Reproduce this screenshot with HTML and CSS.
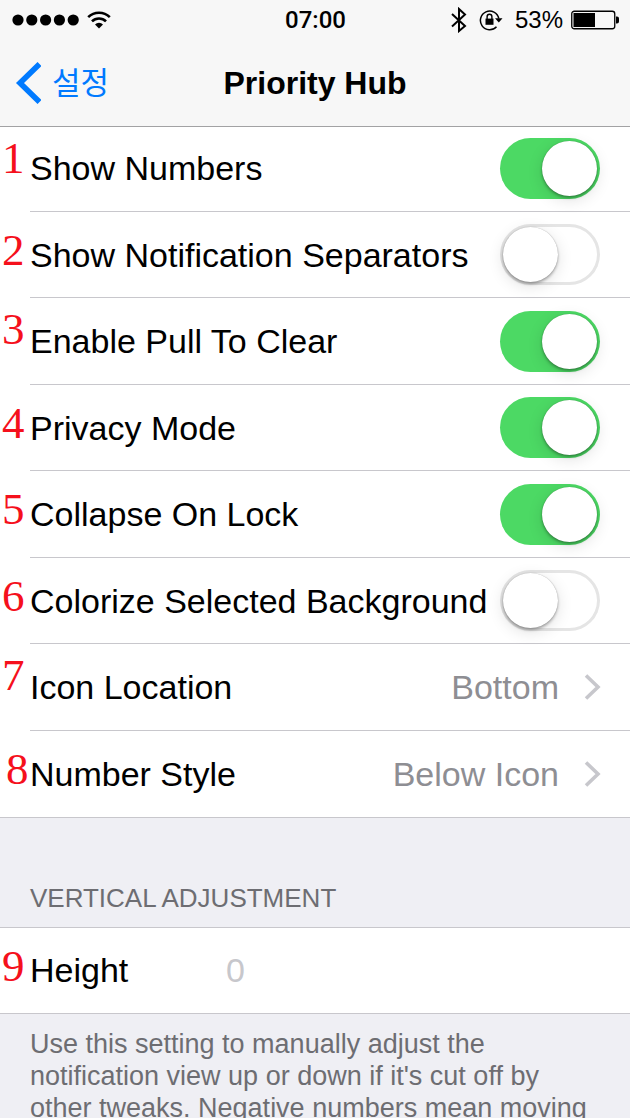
FILE: index.html
```html
<!DOCTYPE html>
<html lang="ko">
<head>
<meta charset="utf-8">
<meta name="viewport" content="width=device-width">
<title>Priority Hub</title>
<link rel="stylesheet" href="styles.css">
</head>
<body>
<div class="screen">
  <header class="top">
    <div class="status">
      <div class="status-left">
        <svg width="68" height="12" viewBox="0 0 68 12" aria-hidden="true"><circle cx="6" cy="6" r="5.6"/><circle cx="19.8" cy="6" r="5.6"/><circle cx="33.6" cy="6" r="5.6"/><circle cx="47.4" cy="6" r="5.6"/><circle cx="61.2" cy="6" r="5.6"/></svg>
        <svg width="24" height="18" viewBox="0 0 24 18" aria-hidden="true"><g fill="none" stroke="#000" stroke-width="2.6"><path d="M1.2 6.2a15.3 15.3 0 0 1 21.6 0"/><path d="M5 10.4a9.9 9.9 0 0 1 14 0"/></g><path d="M12 17.5 8 13.4a5.7 5.7 0 0 1 8 0z"/></svg>
      </div>
      <time class="clock">07:00</time>
      <div class="status-right">
        <svg class="bluetooth" width="16" height="26" viewBox="0 0 16 26" aria-hidden="true"><path d="M1 7 14 19 8 24V2L14 7.500 1 19.500" fill="none" stroke="#000" stroke-width="2"/></svg>
        <svg class="lock" width="24" height="22" viewBox="0 0 24 22" aria-hidden="true"><path d="M17.500 17.800A9.300 9.300 0 1 1 19.800 9.500" fill="none" stroke="#000" stroke-width="1.500"/><path d="M16 9.300h7.500l-3.700 4.200z"/><path d="M6.500 9.600h8v6.200h-8z"/><path d="M8.100 10V7.700a2.400 2.400 0 0 1 4.800 0V10" fill="none" stroke="#000" stroke-width="1.400"/></svg>
        <span class="percent">53%</span>
        <svg width="48" height="20" viewBox="0 0 48 20" aria-hidden="true"><rect x=".75" y="1.250" width="43" height="17.500" rx="2.500" fill="none" stroke="#000" stroke-width="1.300"/><path d="M2.500 3h21.500v14H2.500zM45 6.500h1a2 2 0 0 1 2 2v3a2 2 0 0 1-2 2h-1z"/></svg>
      </div>
    </div>
    <nav class="nav">
      <button class="back" type="button">
        <svg width="26" height="42" viewBox="0 0 26 42" aria-hidden="true"><path d="M24.500 2 5 21 24.500 40" fill="none" stroke="#007aff" stroke-width="5.600"/></svg>
        <span class="back-text">설정</span>
      </button>
      <h1 class="title">Priority Hub</h1>
    </nav>
  </header>
  <main>
    <ul class="group">
      <li class="row"><span class="mark mark-high">1</span><label class="label" for="numbers">Show Numbers</label><input class="switch" type="checkbox" id="numbers" checked></li>
      <li class="row"><span class="mark">2</span><label class="label" for="separators">Show Notification Separators</label><input class="switch" type="checkbox" id="separators"></li>
      <li class="row"><span class="mark mark-high">3</span><label class="label" for="pull">Enable Pull To Clear</label><input class="switch" type="checkbox" id="pull" checked></li>
      <li class="row"><span class="mark">4</span><label class="label" for="privacy">Privacy Mode</label><input class="switch" type="checkbox" id="privacy" checked></li>
      <li class="row"><span class="mark">5</span><label class="label" for="collapse">Collapse On Lock</label><input class="switch" type="checkbox" id="collapse" checked></li>
      <li class="row"><span class="mark">6</span><label class="label" for="colorize">Colorize Selected Background</label><input class="switch" type="checkbox" id="colorize"></li>
      <li class="row"><span class="mark mark-high">7</span><button class="link" type="button"><span class="label">Icon Location</span><span class="value">Bottom</span><svg width="18" height="28" viewBox="0 0 18 28" aria-hidden="true"><path d="M3 2.500 15 14 3 25.500" fill="none" stroke="#c7c7cc" stroke-width="3.600"/></svg></button></li>
      <li class="row"><span class="mark mark-inset">8</span><button class="link" type="button"><span class="label">Number Style</span><span class="value">Below Icon</span><svg width="18" height="28" viewBox="0 0 18 28" aria-hidden="true"><path d="M3 2.500 15 14 3 25.500" fill="none" stroke="#c7c7cc" stroke-width="3.600"/></svg></button></li>
    </ul>
    <h2 class="heading">VERTICAL ADJUSTMENT</h2>
    <div class="group">
      <div class="row"><span class="mark">9</span><label class="label label-field" for="height">Height</label><input class="field" type="text" id="height" placeholder="0"></div>
    </div>
    <p class="note">Use this setting to manually adjust the notification view up or down if it's cut off by other tweaks. Negative numbers mean moving</p>
  </main>
</div>
</body>
</html>
```
FILE: styles.css
```css
* { box-sizing: border-box; }

body {
  margin: 0;
  background: #efeff4;
  color: #000;
  font-family: "Liberation Sans", "Noto Sans CJK KR", sans-serif;
}

button, input { font: inherit; color: inherit; }
button { border: 0; padding: 0; background: none; }

.screen { height: 100vh; overflow: hidden; }

.top { background: #f7f7f7; border-bottom: 1px solid #a2a2a4; }

.status {
  display: grid;
  grid-template-columns: 1fr auto 1fr;
  align-items: center;
  height: 40px;
  padding: 0 11px 0 12px;
}
.status-left { display: flex; align-items: center; gap: 7px; }
.status-right { display: flex; align-items: center; justify-content: flex-end; }
.bluetooth { margin-right: 12px; }
.lock { margin-right: 12px; }
.clock { font: 500 24px/40px Roboto, sans-serif; }
.percent { margin-right: 8px; font-size: 24px; line-height: 40px; }

.nav {
  display: grid;
  grid-template-columns: 1fr auto 1fr;
  align-items: center;
  height: 86px;
}
.back {
  display: flex;
  align-items: center;
  gap: 11px;
  padding-left: 15px;
  color: #007aff;
  font: 400 31px/40px "Noto Sans CJK KR", sans-serif;
}
.back-text { padding-bottom: 4px; }
.title { margin: 0; font-size: 32px; line-height: 40px; font-weight: 700; }

.group {
  margin: 0;
  padding: 0;
  list-style: none;
  background: #fff;
  border-bottom: 1px solid #c8c7cc;
}
.row {
  position: relative;
  display: flex;
  align-items: center;
  height: 87px;
  padding-right: 30px;
  margin-left: 30px;
  border-bottom: 1px solid #c8c7cc;
}
.row:nth-child(even) { height: 86px; }
.row:first-child { height: 85px; padding-bottom: 2px; }
.row:last-child { border-bottom: 0; }

.label {
  flex: 1;
  font-size: 34px;
  line-height: 40px;
  white-space: nowrap;
  text-align: left;
}
.label-field { flex: 0 0 196px; }

.link { display: flex; flex: 1; align-items: center; margin-right: -1px; }
.value { margin-right: 24px; color: #8e8e93; font-size: 34px; line-height: 40px; }

.field {
  flex: 1;
  min-width: 0;
  padding: 0;
  border: 0;
  outline: 0;
  background: none;
  font-size: 34px;
  line-height: 40px;
}
.field::placeholder { color: #c7c7cc; opacity: 1; }

.mark {
  position: absolute;
  left: -28px;
  top: 18px;
  color: #f5101c;
  font: 45px/40px "Liberation Serif", serif;
}
.mark-high { top: 11px; }
.mark-inset { left: -24px; }

.switch {
  appearance: none;
  flex: none;
  width: 100px;
  height: 61px;
  margin: 0;
  padding: 3px;
  border-radius: 31px;
  background: #fff;
  box-shadow: inset 0 0 0 3px #e5e5e5;
}
.switch::before {
  content: "";
  display: block;
  width: 55px;
  height: 55px;
  border-radius: 50%;
  background: #fff;
  box-shadow: 0 0 1px rgba(0, 0, 0, .3), 0 2px 3px rgba(0, 0, 0, .3), 0 4px 16px rgba(0, 0, 0, .12);
}
.switch:checked { background: #4cd964; box-shadow: none; }
.switch:checked::before { margin-left: auto; }

.heading {
  margin: 0;
  padding: 64px 30px 13px;
  border-bottom: 1px solid #c8c7cc;
  color: #6d6d72;
  font-size: 26px;
  line-height: 32px;
  font-weight: 400;
}
.note {
  margin: 0;
  padding: 14px 40px 14px 30px;
  color: #6d6d72;
  font-size: 27px;
  line-height: 32px;
}
```
